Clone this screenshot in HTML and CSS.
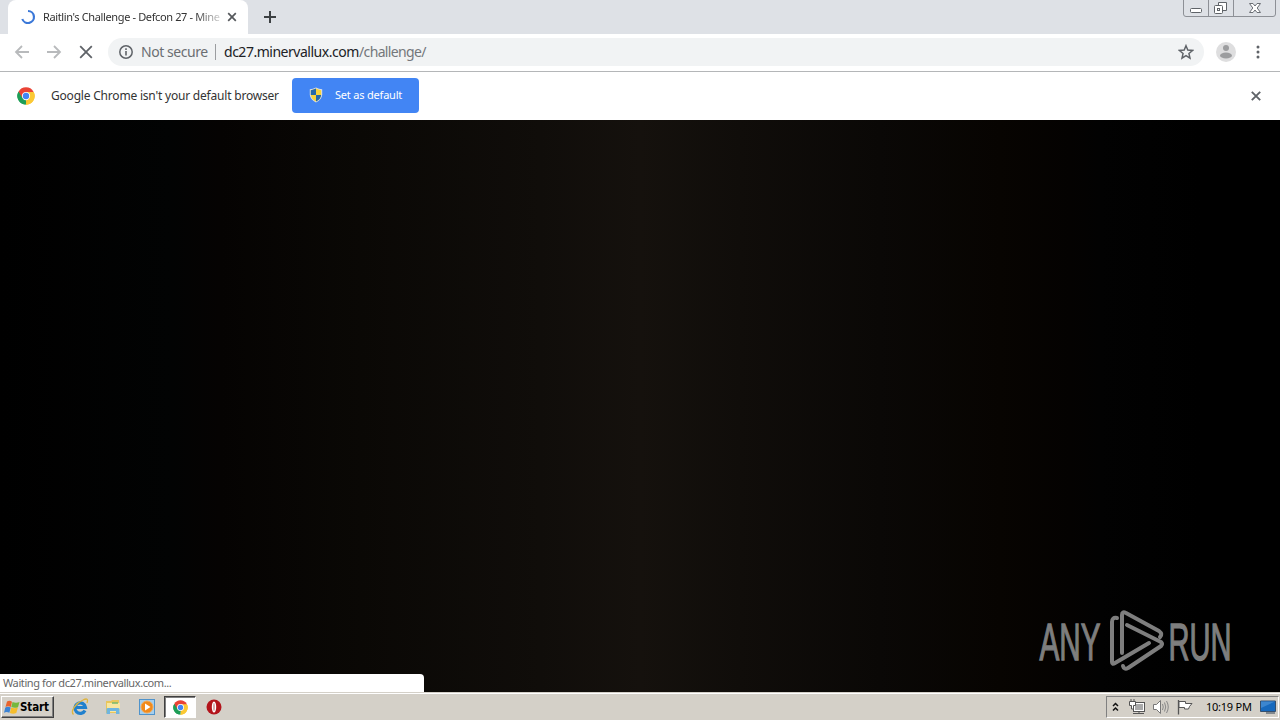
FILE: index.html
```html
<!DOCTYPE html>
<html lang="en">
<head>
  <meta charset="UTF-8" />
  <title>Raitlin's Challenge - Defcon 27</title>
  <link rel="stylesheet" href="styles.css">
</head>
<body>
  <svg width="0" height="0" class="defs">
    <symbol id="chrome" viewBox="0 0 48 48">
      <circle cx="24" cy="24" r="23" fill="#fff"/>
      <path d="M24 24 4 12.500A23 23 0 0 1 44 12.500Z" fill="#ea4335"/>
      <path d="M24 24 44 12.500A23 23 0 0 1 24 47Z" fill="#fbc02d"/>
      <path d="M24 24V47A23 23 0 0 1 4 12.500Z" fill="#1e9e57"/>
      <path d="M24 13H44.300L34 30ZM14 30 4 12.500 22 13Z" fill="#ea4335"/>
      <path d="M4 12.500 14.500 30 24 35 20 46.500A23 23 0 0 1 4 12.500Z" fill="#1e9e57"/>
      <path d="M24 13.500H44.500A23 23 0 0 1 23 47L34 29Z" fill="#fbc934"/>
      <circle cx="24" cy="24" r="11" fill="#fff"/>
      <circle cx="24" cy="24" r="8.500" fill="#4285f4"/>
    </symbol>
  </svg>

  <div class="tab-strip">
    <div class="tab">
      <svg class="spinner" width="16" height="16" viewBox="0 0 16 16"><path d="M8 2A6 6 0 1 1 2.300 10" fill="none" stroke="#3b78d8" stroke-width="2.200"/></svg>
      <span class="tab-title">Raitlin's Challenge - Defcon 27 - Mine</span>
      <svg width="10" height="10" viewBox="0 0 10 10"><path d="M1.200 1.200 8.800 8.800M8.800 1.200 1.200 8.800" stroke="#55585c" stroke-width="1.700"/></svg>
    </div>
    <svg class="new-tab" width="12" height="12" viewBox="0 0 12 12"><path d="M6 0V12M0 6H12" stroke="#3c4043" stroke-width="2"/></svg>
    <svg class="window-buttons" width="94" height="18" viewBox="0 0 94 18">
      <path d="M.5 0V14Q.5 16.500 3 16.500H90Q92.500 16.500 92.500 14V0M25.500 0V16M50.500 0V16" fill="none" stroke="#8d9096"/>
      <rect x="7.500" y="8.500" width="11" height="4" rx="1" fill="#fff" stroke="#5f6368"/>
      <path d="M35.500 5.500V2.500H43.500V10.500H40" fill="#fff" stroke="#5f6368"/>
      <rect x="31.500" y="5.500" width="8" height="8" rx="1" fill="#fff" stroke="#5f6368"/>
      <rect x="34.500" y="8.500" width="2" height="2" fill="#fff" stroke="#5f6368"/>
      <path d="M66.500 3.500H70L72 6 74 3.500H77.500L74.200 8 77.500 12.500H74L72 10 70 12.500H66.500L69.800 8Z" fill="#fff" stroke="#6b6f75"/>
    </svg>
  </div>

  <div class="toolbar">
    <svg width="16" height="14" viewBox="0 0 16 14"><path d="M15 7H2M8 1 2 7 8 13" fill="none" stroke="#b8babc" stroke-width="1.800"/></svg>
    <svg width="16" height="14" viewBox="0 0 16 14"><path d="M1 7H14M8 1 14 7 8 13" fill="none" stroke="#b8babc" stroke-width="1.800"/></svg>
    <svg width="16" height="14" viewBox="0 0 16 14"><path d="M2.200 1.200 13.800 12.800M13.800 1.200 2.200 12.800" stroke="#5f6368" stroke-width="1.800"/></svg>
    <div class="omnibox">
      <svg width="14" height="14" viewBox="0 0 14 14"><circle cx="7" cy="7" r="6.200" fill="none" stroke="#5f6368" stroke-width="1.500"/><path d="M7 6V10.500M7 3.300V4.900" stroke="#5f6368" stroke-width="1.600"/></svg>
      <span class="not-secure">Not secure</span>
      <span class="divider"></span>
      <span class="host">dc27.minervallux.com</span><span class="path">/challenge/</span>
      <svg class="star" width="16" height="16" viewBox="0 0 24 24"><path d="M12 2.500 14.700 9.100 21.800 9.700 16.400 14.300 18 21.300 12 17.500 6 21.300 7.600 14.300 2.200 9.700 9.300 9.100Z" fill="none" stroke="#5f6368" stroke-width="2.200"/></svg>
    </div>
    <svg class="avatar" width="20" height="20" viewBox="0 0 20 20"><circle cx="10" cy="10" r="10" fill="#dededf"/><circle cx="10" cy="6" r="3" fill="#9c9d9f"/><ellipse cx="10" cy="13.500" rx="6" ry="3" fill="#9c9d9f"/></svg>
    <svg class="menu" width="4" height="14" viewBox="0 0 4 14"><g fill="#5f6368"><circle cx="2" cy="2" r="1.500"/><circle cx="2" cy="7" r="1.500"/><circle cx="2" cy="12" r="1.500"/></g></svg>
  </div>

  <div class="infobar">
    <svg width="18" height="18"><use href="#chrome"/></svg>
    <span class="info-text">Google Chrome isn't your default browser</span>
    <button class="set-default">
      <svg width="14" height="16" viewBox="0 0 14 16">
        <path d="M7 .5Q10 2 13.200 2.300V8Q12.500 13 7 15.500 1.500 13 .8 8V2.300Q4 2 7 .5Z" fill="#d9dfe6"/>
        <path d="M7 1.600Q9.500 3 12.200 3.200V8Q11.500 12.500 7 14.500 2.500 12.500 1.800 8V3.200Q4.500 3 7 1.600Z" fill="#f8d33a"/>
        <path d="M7 1.600V8H1.800V3.200Q4.500 3 7 1.600ZM7 8H12.200Q11.500 12.500 7 14.500Z" fill="#2568a8"/>
      </svg>
      <span>Set as default</span>
    </button>
    <svg class="info-close" width="10" height="10" viewBox="0 0 10 10"><path d="M.8 .8 9.200 9.200M9.200 .8 .8 9.200" stroke="#5f6368" stroke-width="1.900"/></svg>
  </div>

  <div class="page">
    <div class="status">Waiting for dc27.minervallux.com...</div>
    <svg class="watermark" width="220" height="66" viewBox="0 0 220 66">
      <g class="watermark-text">
        <text x="3.500" y="51.500" textLength="61" lengthAdjust="spacingAndGlyphs">ANY</text>
        <text x="132.500" y="51.500" textLength="63" lengthAdjust="spacingAndGlyphs">RUN</text>
      </g>
      <g fill="none" stroke="#7e7e7e" stroke-width="4" stroke-linejoin="round" stroke-linecap="round">
        <path d="M81 10Q76 9 76 14V54Q76 57 79 55L113 35"/>
        <path d="M86 45V7Q86 3 90 5L123 23Q127 26 124 29"/>
        <path d="M91 17 125 34Q127 36 125 38L92 60Q88 62 87 58"/>
      </g>
    </svg>
  </div>

  <div class="taskbar">
    <div class="start">
      <svg width="16" height="15" viewBox="0 0 16 15">
        <path d="M3 1.500Q5.500 0 8 1.700L6.800 6.900Q4 5.600 1.500 7Z" fill="#e9642c"/>
        <path d="M8.500 2Q12 3.500 15.500 2L14 7.200Q10.500 8.500 7.300 7Z" fill="#75b83e"/>
        <path d="M1.300 7.400Q4 6.100 6.700 7.400L5.400 12.700Q2.500 11.200 0 12.700Z" fill="#3b83d4"/>
        <path d="M7.200 7.500Q10.500 9 13.900 7.600L12.300 13Q9 14.500 5.900 12.900Z" fill="#f5bd2c"/>
      </svg>
      <span>Start</span>
    </div>
    <div class="quick">
      <svg width="18" height="18" viewBox="0 0 18 18">
        <path d="M14 12.500A5.300 5.300 0 1 1 14.500 9.500H5" fill="none" stroke="#2080cd" stroke-width="3.200"/>
        <path d="M2.500 16.500C-1 13 5 5 12 2Q18-1 16 5" fill="none" stroke="#dfb43c" stroke-width="1.300"/>
      </svg>
    </div>
    <div class="quick">
      <svg width="18" height="18" viewBox="0 0 18 18">
        <path d="M2 3H7L8 2H15V15H2Z" fill="#e9c65b"/><path d="M3 5H16V14H3Z" fill="#f8e6a0"/>
        <path d="M8 5H14" stroke="#77b86d" stroke-width="1.500"/>
        <path d="M2.500 16V11Q2.500 10 4 10H14Q15.500 10 15.500 11V16H12V13H6V16Z" fill="#6fb5df"/>
      </svg>
    </div>
    <div class="quick">
      <svg width="16" height="16" viewBox="0 0 16 16">
        <rect x=".5" y=".5" width="15" height="15" fill="#a5cfee" stroke="#4f93cb"/>
        <circle cx="8" cy="8" r="6" fill="#f18a1b" stroke="#f5a953"/><path d="M6 4.500 11.500 8 6 11.500Z" fill="#fff"/>
      </svg>
    </div>
    <div class="quick active"><svg width="15" height="15"><use href="#chrome"/></svg></div>
    <div class="quick">
      <svg width="16" height="16" viewBox="0 0 16 16"><circle cx="8" cy="8" r="7.500" fill="#b3141b"/><ellipse cx="8" cy="8" rx="2.200" ry="5.500" fill="#fff"/><ellipse cx="8" cy="8" rx=".7" ry="4" fill="#c98588"/></svg>
    </div>
    <div class="tray">
      <svg width="7" height="10" viewBox="0 0 7 10"><path d="M1 4 3.500 1.500 6 4M1 8.500 3.500 6 6 8.500" fill="none" stroke="#111" stroke-width="1.500"/></svg>
      <svg class="network" width="16" height="16" viewBox="0 0 16 16"><rect x="4.500" y="3.500" width="11" height="9" fill="#fff" stroke="#555"/><rect x="6" y="5" width="8" height="6" fill="#aaa"/><path d="M4 14.500H15M10 12V14" stroke="#555"/><path d="M.5 2.500H6.500V6.500H4.500V10H2.500V6.500H.5ZM2 0V3M5 0V3" fill="#fff" stroke="#555"/></svg>
      <svg width="17" height="16" viewBox="0 0 17 16"><path d="M.5 5.500H3.500L7.500 1.500V14.500L3.500 10.500H.5Z" fill="#fff" stroke="#777"/><path d="M9.500 5Q11 8 9.500 11M11.500 3.500Q14 8 11.500 12.500M13.500 2Q17 8 13.500 14" fill="none" stroke="#888"/></svg>
      <svg class="flag" width="16" height="16" viewBox="0 0 16 16"><path d="M1.500 1V15.500" stroke="#555" stroke-width="1.300"/><path d="M2 2.500H8.500V4.500H15L12.500 7.500 11.500 10H7.500V8.500H2Z" fill="#fff" stroke="#555"/></svg>
      <span class="clock">10:19 PM</span>
      <svg width="16" height="14" viewBox="0 0 16 14"><path d="M.5 1H15.500V11.500H.5Z" fill="#1769bd" stroke="#354f6d"/><path d="M1 1.500H15L1 8Z" fill="#3c86cf"/><path d="M6 13H15" stroke="#66717b" stroke-width="1.500"/></svg>
    </div>
  </div>
</body>
</html>
```
FILE: styles.css
```css
* {
  box-sizing: border-box;
}
body {
  margin: 0;
  width: 1280px;
  height: 720px;
  overflow: hidden;
  display: flex;
  flex-direction: column;
  background: #fff;
  font-family: "Noto Sans", sans-serif;
  font-size: 11px;
  color: #333;
  white-space: nowrap;
}
svg {
  display: block;
  flex-shrink: 0;
}
.defs {
  position: absolute;
}
.tab-strip {
  height: 34px;
  display: flex;
  background: #dee1e6;
  padding-left: 8px;
}
.tab {
  width: 240px;
  height: 34px;
  display: flex;
  align-items: center;
  padding-left: 12px;
  background: #fff;
  border-radius: 8px 8px 0 0;
}
.tab-title {
  width: 177px;
  margin: 0 7px;
  padding-bottom: 1px;
  letter-spacing: -0.37px;
  -webkit-mask-image: linear-gradient(90deg, #000 152px, rgba(0,0,0,0.2) 177px);
}
.new-tab {
  margin: 11px 0 0 16px;
}
.window-buttons {
  margin-left: auto;
  margin-right: 3px;
}
.toolbar {
  height: 38px;
  display: flex;
  align-items: center;
  padding: 0 19px 1px 14px;
  gap: 16px;
  border-bottom: 1px solid #b4b6b8;
}
.omnibox {
  width: 1096px;
  height: 28px;
  margin-left: -2px;
  display: flex;
  align-items: center;
  padding: 0 10px 0 11px;
  border-radius: 14px;
  background: #f1f3f4;
  font-size: 14px;
}
.not-secure {
  width: 67px;
  margin-left: 8px;
  padding-bottom: 1px;
  letter-spacing: -0.45px;
  color: #6b6e72;
}
.divider {
  width: 1px;
  height: 16px;
  margin: 0 8px 0 7px;
  background: #9b9da0;
}
.host {
  width: 135px;
  padding-bottom: 1px;
  letter-spacing: -0.48px;
  color: #202124;
}
.path {
  padding-bottom: 1px;
  letter-spacing: -0.65px;
  color: #74777b;
}
.star {
  margin-left: auto;
}
.avatar {
  margin-left: -4px;
}
.menu {
  margin-left: 4px;
}
.infobar {
  height: 48px;
  display: flex;
  align-items: center;
  padding: 0 19px 0 17px;
}
.info-text {
  width: 229px;
  margin: 0 12px 0 16px;
  padding-bottom: 1px;
  font-size: 12px;
  letter-spacing: -0.2px;
}
.set-default {
  width: 127px;
  height: 35px;
  display: flex;
  align-items: center;
  gap: 12px;
  margin-bottom: 2px;
  padding: 0 0 1px 17px;
  border: 0;
  border-radius: 4px;
  background: #4285f4;
  color: #fff;
  font: 11px "Noto Sans", sans-serif;
  letter-spacing: -0.2px;
}
.info-close {
  margin-left: auto;
}
.page {
  position: relative;
  height: 572px;
  display: flex;
  align-items: flex-end;
  background: linear-gradient(90deg, #000 0, #020303 170px, #050302 220px, #0a0805 360px, #100d0a 540px, #15110d 640px, #100d0a 740px, #0a0806 880px, #070401 1000px, #040201 1070px, #020202 1100px, #000 1200px);
}
.status {
  width: 424px;
  height: 18px;
  padding-left: 3px;
  border-top-right-radius: 4px;
  background: #fff;
  color: #666;
  line-height: 18px;
  letter-spacing: -0.4px;
}
.watermark {
  position: absolute;
  left: 1036px;
  top: 488px;
}
.watermark-text {
  fill: #7e7e7e;
  stroke: #7e7e7e;
  stroke-width: 1.3px;
  font-family: "Liberation Sans", sans-serif;
  font-size: 52px;
}
.taskbar {
  height: 28px;
  display: flex;
  align-items: center;
  padding: 2px 1px 0 1px;
  background: #d4d0c8;
  box-shadow: inset 0 1px #d4d0c8, inset 0 2px #fff;
}
.start {
  width: 53px;
  height: 22px;
  display: flex;
  align-items: center;
  margin-right: 9.5px;
  padding-left: 2px;
  border: 1px solid;
  border-color: #fff #404040 #404040 #fff;
  box-shadow: inset -1px -1px #808080;
  color: #000;
  font: bold 11.500px "DejaVu Sans Condensed", "DejaVu Sans", sans-serif;
  letter-spacing: -0.1px;
}
.quick {
  width: 32px;
  height: 22px;
  margin-right: 1.6px;
  display: flex;
  align-items: center;
  justify-content: center;
}
.active {
  border: 1px solid;
  border-color: #404040 #fff #fff #404040;
  box-shadow: inset 1px 1px #808080;
  background: #fff;
}
.tray {
  width: 173px;
  height: 22px;
  display: flex;
  align-items: center;
  margin-left: auto;
  padding-left: 5px;
  gap: 8px;
  border: 1px solid;
  border-color: #808080 #fff #fff #808080;
}
.network {
  margin-left: 2px;
}
.flag {
  margin-left: -1px;
}
.clock {
  width: 46px;
  margin: 0 0 0 5px;
  padding-bottom: 1px;
  color: #000;
  letter-spacing: -0.25px;
}
```
